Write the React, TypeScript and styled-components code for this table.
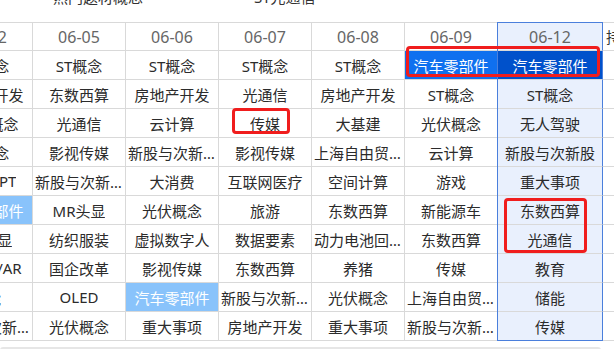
import React from "react";
import styled, { createGlobalStyle } from "styled-components";

type Tone = "plain" | "bright" | "deep" | "soft";

interface CellData {
  text: string;
  tone?: Tone;
}

const DATES = ["06-02", "06-05", "06-06", "06-07", "06-08", "06-09", "06-12"];
const ACTIVE_COL = 6;

const c = (text: string, tone: Tone = "plain"): CellData => ({ text, tone });

const ROWS: CellData[][] = [
  [c("ST概念"), c("ST概念"), c("ST概念"), c("ST概念"), c("ST概念"), c("汽车零部件", "bright"), c("汽车零部件", "deep")],
  [c("房地产开发"), c("东数西算"), c("房地产开发"), c("光通信"), c("房地产开发"), c("ST概念"), c("ST概念")],
  [c("AIGC概念"), c("光通信"), c("云计算"), c("传媒"), c("大基建"), c("光伏概念"), c("无人驾驶")],
  [c("ST概念"), c("影视传媒"), c("新股与次新股"), c("影视传媒"), c("上海自由贸易区"), c("云计算"), c("新股与次新股")],
  [c("ChatGPT"), c("新股与次新股"), c("大消费"), c("互联网医疗"), c("空间计算"), c("游戏"), c("重大事项")],
  [c("汽车零部件", "soft"), c("MR头显"), c("光伏概念"), c("旅游"), c("东数西算"), c("新能源车"), c("东数西算")],
  [c("MR头显"), c("纺织服装"), c("虚拟数字人"), c("数据要素"), c("动力电池回收"), c("东数西算"), c("光通信")],
  [c("MR/VR/AR"), c("国企改革"), c("影视传媒"), c("东数西算"), c("养猪"), c("传媒"), c("教育")],
  [c("储能"), c("OLED"), c("汽车零部件", "soft"), c("新股与次新股"), c("光伏概念"), c("上海自由贸易区"), c("储能")],
  [c("新股与次新股"), c("光伏概念"), c("重大事项"), c("房地产开发"), c("重大事项"), c("新股与次新股"), c("传媒")],
];

// red annotation boxes drawn over the sheet
const MARKS = [
  { left: 466, top: 23, width: 194, height: 31 },
  { left: 292, top: 85, width: 58, height: 26 },
  { left: 564, top: 175, width: 83, height: 55 },
];

const GlobalStyle = createGlobalStyle`
  html, body {
    margin: 0;
    padding: 0;
    width: 614px;
    height: 349px;
    overflow: hidden;
    background: #fff;
  }
  body {
    font-family: "Noto Sans", "Noto Sans CJK SC", sans-serif;
  }
`;

const Page = styled.div`
  width: 614px;
  height: 349px;
  overflow: hidden;
`;

const TopBar = styled.div`
  display: flex;
  gap: 111px;
  height: 22px;
  padding-left: 53px;
  overflow: hidden;
  font-size: 15px;
  line-height: 20px;
  color: #333;
`;

const TopText = styled.span`
  margin-top: -13px;
  white-space: nowrap;
`;

const Sheet = styled.div`
  position: relative;
  width: max-content;
  margin-left: -60px;
  border-top: 1px solid #d9d9d9;
`;

const Row = styled.div`
  display: grid;
  grid-template-columns: repeat(6, 93px) 105px 90px;
`;

const BLUE_LINE = "#4a7fdc";

const toneBg: Record<Tone, string> = {
  plain: "transparent",
  bright: "#0f70ef",
  deep: "#0051cb",
  soft: "#89c3fb",
};

const Cell = styled.div<{ $tone: Tone; $active?: boolean; $head?: boolean; $last?: boolean }>`
  box-sizing: border-box;
  height: ${(p) => (p.$head ? 28 : 29)}px;
  padding: 0 2px;
  display: flex;
  align-items: center;
  justify-content: center;
  border-right: 1px solid ${(p) => (p.$active ? BLUE_LINE : "#d9d9d9")};
  border-bottom: 1px solid ${(p) => (p.$active && p.$last ? BLUE_LINE : "#d9d9d9")};
  background: ${(p) => (p.$tone !== "plain" ? toneBg[p.$tone] : p.$active ? "#e9f0fd" : "#fff")};
  box-shadow: ${(p) =>
    p.$active
      ? p.$head
        ? `-1px 0 0 ${BLUE_LINE}, 0 -1px 0 ${BLUE_LINE}, -1px -1px 0 ${BLUE_LINE}`
        : `-1px 0 0 ${BLUE_LINE}`
      : "none"};
  color: ${(p) => (p.$tone !== "plain" ? "#fff" : p.$head ? "#666" : "#2b2b2b")};
  font-size: ${(p) => (p.$head ? 16 : 15)}px;
  white-space: nowrap;
  overflow: hidden;
`;

const CellText = styled.span`
  overflow: hidden;
  text-overflow: ellipsis;
  white-space: nowrap;
`;

const ExtraCell = styled.div<{ $head?: boolean }>`
  box-sizing: border-box;
  height: ${(p) => (p.$head ? 28 : 29)}px;
  padding-left: 3px;
  display: flex;
  align-items: center;
  border-bottom: 1px solid #d9d9d9;
  color: #333;
  font-size: 15px;
  white-space: nowrap;
  overflow: hidden;
`;

const Mark = styled.div`
  position: absolute;
  box-sizing: border-box;
  border: 3px solid #f01d1d;
  border-radius: 4px;
  pointer-events: none;
`;

const ScrollTrack = styled.div`
  width: 601px;
  height: 6px;
  margin-top: 6px;
  border-radius: 3px;
  background: #e6e6e6;
`;

const App: React.FC = () => (
  <Page>
    <GlobalStyle />
    <TopBar>
      <TopText>热门题材概念</TopText>
      <TopText>ST光通信</TopText>
    </TopBar>
    <Sheet>
      <Row>
        {DATES.map((d, i) => (
          <Cell key={d} $tone="plain" $head $active={i === ACTIVE_COL}>
            <CellText>{d}</CellText>
          </Cell>
        ))}
        <ExtraCell $head>持续天数</ExtraCell>
      </Row>
      {ROWS.map((row, r) => (
        <Row key={r}>
          {row.map((cell, i) => (
            <Cell
              key={i}
              $tone={cell.tone ?? "plain"}
              $active={i === ACTIVE_COL}
              $last={r === ROWS.length - 1}
            >
              <CellText>{cell.text}</CellText>
            </Cell>
          ))}
          <ExtraCell />
        </Row>
      ))}
      {MARKS.map((m, i) => (
        <Mark key={i} style={{ left: m.left, top: m.top, width: m.width, height: m.height }} />
      ))}
    </Sheet>
    <ScrollTrack />
  </Page>
);

export default App;
